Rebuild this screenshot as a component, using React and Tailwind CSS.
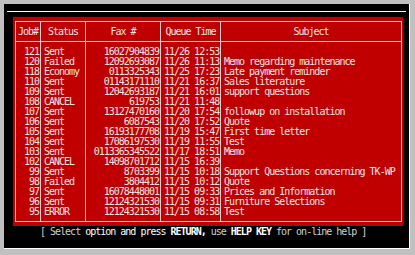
import React from 'react';

const jobs = [
  ['121', 'Sent', '16027904839', '11/26 12:53', ''],
  ['120', 'Failed', '12092693087', '11/26 11:13', 'Memo regarding maintenance'],
  ['118', 'Economy', '0113325343', '11/25 17:23', 'Late payment reminder'],
  ['110', 'Sent', '01143171110', '11/21 16:37', 'Sales literature'],
  ['109', 'Sent', '12042693187', '11/21 16:01', 'support questions'],
  ['108', 'CANCEL', '619753', '11/21 11:48', ''],
  ['107', 'Sent', '13127470160', '11/20 17:54', 'followup on installation'],
  ['106', 'Sent', '6087543', '11/20 17:52', 'Quote'],
  ['105', 'Sent', '16193177708', '11/19 15:47', 'First time letter'],
  ['104', 'Sent', '17086197530', '11/19 11:55', 'Test'],
  ['103', 'Sent', '0113365345522', '11/17 18:51', 'Memo'],
  ['102', 'CANCEL', '14098701712', '11/15 16:39', ''],
  ['99', 'Sent', '8703399', '11/15 10:18', 'Support Questions concerning TK-WP'],
  ['98', 'Failed', '3804412', '11/15 10:12', 'Quote'],
  ['97', 'Sent', '16078448001', '11/15 09:33', 'Prices and Information'],
  ['96', 'Sent', '12124321530', '11/15 09:31', 'Furniture Selections'],
  ['95', 'ERROR', '12124321530', '11/15 08:58', 'Test'],
];

const cols = [
  { title: 'Job#', cell: 'text-right pr-[1px]' },
  { title: 'Status', cell: 'pl-[3px]' },
  { title: 'Fax #', cell: 'text-right pr-[1px]' },
  { title: 'Queue Time', cell: 'pl-[3px]' },
  { title: 'Subject', cell: 'pl-[3px]' },
];

// Fax queue screen
const App = () => {
  return (
    <div className="w-[415px] h-[255px] bg-[#c0c0c0] pt-[4px] pl-[4px] font-['DejaVu_Sans_Mono',monospace] text-[10px] tracking-[-1px]">
      <div className="w-[406px] h-[245px] bg-black border-r border-b border-white flex flex-col">
        <div className="mt-[7px] ml-[3px] w-[399px] h-px bg-white" />
        <div className="mt-[5px] ml-[9px] w-[390px] h-[209px] bg-[#c00000] pt-[4px] pl-[2px]">
          <div className="w-[387px] h-[201px] border border-[#d8d0d0] text-[#e8e8e8]">
            <div className="grid grid-cols-[24px_45px_75px_60px_181px] h-[20px] border-b border-[#d8d0d0]">
              {cols.map((c, i) => (
                <div key={c.title} className={`flex items-center justify-center whitespace-pre ${i ? 'border-l border-[#d8d0d0]' : ''}`}>
                  {c.title}
                </div>
              ))}
            </div>
            <div className="grid grid-cols-[24px_45px_75px_60px_181px] h-[179px]">
              {cols.map((c, i) => (
                <div key={c.title} className={`pt-[5px] ${i ? 'border-l border-[#d8d0d0]' : ''}`}>
                  {jobs.map((j) => (
                    <div key={j[0]} className={`h-[10px] leading-[10px] whitespace-pre overflow-hidden ${c.cell}`}>
                      {j[i]}
                    </div>
                  ))}
                </div>
              ))}
            </div>
          </div>
        </div>
        <div className="h-[11px] leading-[11px] pl-[36px] whitespace-pre text-[#d0d0d0]">
          [ Select <span className="text-white">option and press </span>
          <span className="text-white font-bold">RETURN,</span> use{' '}
          <span className="text-white font-bold">HELP KEY</span> for on-line help ]
        </div>
      </div>
    </div>
  );
};

export default App;
